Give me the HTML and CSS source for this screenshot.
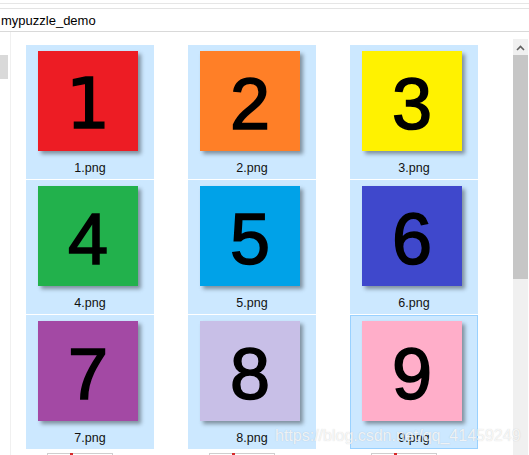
FILE: index.html
```html
<!DOCTYPE html>
<html>
<head>
<meta charset="utf-8">
<link rel="stylesheet" href="styles.css">
</head>
<body>
<div class="window">
  <div class="toolbar"></div>
  <div class="address"><span class="path">mypuzzle_demo</span></div>
  <div class="main">
    <div class="nav"><div class="nav-sel"></div></div>
    <div class="content">
      <div class="grid">
        <div class="tile"><div class="img c1 footed">1</div><div class="label">1.png</div></div>
        <div class="tile"><div class="img c2">2</div><div class="label">2.png</div></div>
        <div class="tile"><div class="img c3">3</div><div class="label">3.png</div></div>
        <div class="tile"><div class="img c4">4</div><div class="label">4.png</div></div>
        <div class="tile"><div class="img c5">5</div><div class="label">5.png</div></div>
        <div class="tile"><div class="img c6">6</div><div class="label">6.png</div></div>
        <div class="tile"><div class="img c7">7</div><div class="label">7.png</div></div>
        <div class="tile"><div class="img c8">8</div><div class="label">8.png</div></div>
        <div class="tile focus"><div class="img c9">9</div><div class="label">9.png</div></div>
        <div class="tile plain"><div class="peek"><span class="mark"></span></div></div>
        <div class="tile plain"><div class="peek"><span class="mark"></span></div></div>
        <div class="tile plain"><div class="peek"><span class="mark"></span></div></div>
      </div>
    </div>
    <div class="scrollbar">
      <div class="arrow">
        <svg width="15" height="16" viewBox="0 0 15 16"><polyline points="4,11 7.5,7.5 11,11" fill="none" stroke="#606060" stroke-width="1.6"/></svg>
      </div>
      <div class="thumb"></div>
      <div class="track"></div>
    </div>
  </div>
  <div class="watermark">https://blog.csdn.net/qq_41459249</div>
</div>
</body>
</html>
```

FILE: styles.css
```css
html, body {
  margin: 0;
  padding: 0;
  background: #ffffff;
}
.window {
  width: 529px;
  height: 455px;
  overflow: hidden;
  position: relative;
  font-family: "Liberation Sans", Arial, sans-serif;
}
.toolbar {
  height: 9px;
  border-top: 1px solid #ffffff;
  box-sizing: border-box;
  position: relative;
  border-bottom: 1px solid #e3e3e3;
  background: linear-gradient(#ffffff 0, #ffffff 2px, #e6e6e6 2px, #e6e6e6 3px, #ffffff 3px);
}
.address {
  height: 22px;
  border-bottom: 1px solid #d9d9d9;
  display: flex;
  align-items: center;
  font-size: 13px;
  color: #000;
}
.path {
  padding-left: 1px;
  padding-top: 1px;
}
.main {
  display: flex;
  height: 423px;
}
.nav {
  width: 10px;
  border-right: 1px solid #f0f0f0;
  flex: none;
}
.nav-sel {
  margin-top: 23px;
  width: 8px;
  height: 24px;
  background: #d9d9d9;
}
.content {
  flex: 1;
  padding: 13px 0 0 15px;
  overflow: hidden;
}
.grid {
  display: grid;
  grid-template-columns: repeat(3, 128px);
  grid-auto-rows: 134px;
  column-gap: 34px;
  row-gap: 1px;
}
.tile {
  background: #cce8ff;
  border: 1px solid #cce8ff;
  box-sizing: border-box;
  display: flex;
  flex-direction: column;
  padding-top: 5px;
}
.tile.focus {
  border-color: #99d1ff;
}
.tile.plain {
  background: #ffffff;
  border-color: #ffffff;
  padding-top: 2px;
}
.img {
  width: 100px;
  height: 100px;
  margin-left: 11px;
  display: flex;
  align-items: center;
  justify-content: center;
  font-size: 72px;
  line-height: 1;
  -webkit-text-stroke: 1.6px #000;
  padding-top: 5px;
  box-sizing: border-box;
  color: #000;
  box-shadow: 3px 3px 4px rgba(0, 0, 0, 0.38);
}
.img.footed {
  font-family: "DejaVu Sans", Verdana, sans-serif;
  font-size: 70px;
  -webkit-text-stroke: 1.4px #000;
}
.c1 { background: #ed1c24; }
.c2 { background: #ff7f27; }
.c3 { background: #fff200; }
.c4 { background: #22b14c; }
.c5 { background: #00a2e8; }
.c6 { background: #3f48cc; }
.c7 { background: #a349a4; }
.c8 { background: #c8bfe7; }
.c9 { background: #ffaec9; }
.label {
  margin-top: 9px;
  text-align: center;
  font-size: 12.5px;
  line-height: 16px;
  color: #111;
}
.peek {
  margin-left: 20px;
  width: 66px;
  height: 20px;
  border: 1px solid #cfcfcf;
  box-sizing: border-box;
  position: relative;
  background: #fff;
}
.mark {
  position: absolute;
  left: 22px;
  top: -1px;
  width: 3px;
  height: 3px;
  background: #d42a2a;
}
.scrollbar {
  width: 15px;
  margin: 7px 1px 0 0;
  flex: none;
  display: flex;
  flex-direction: column;
  background: #f0f0f0;
}
.arrow {
  height: 16px;
  display: flex;
}
.thumb {
  height: 224px;
  background: #c6c6c6;
}
.track {
  flex: 1;
}
.watermark {
  position: absolute;
  left: 275px;
  top: 427px;
  font-size: 16px;
  color: rgba(255, 255, 255, 0.78);
  text-shadow: 0 0 1px rgba(120, 120, 120, 0.35);
  white-space: nowrap;
  font-family: "Liberation Sans", Arial, sans-serif;
}
```
